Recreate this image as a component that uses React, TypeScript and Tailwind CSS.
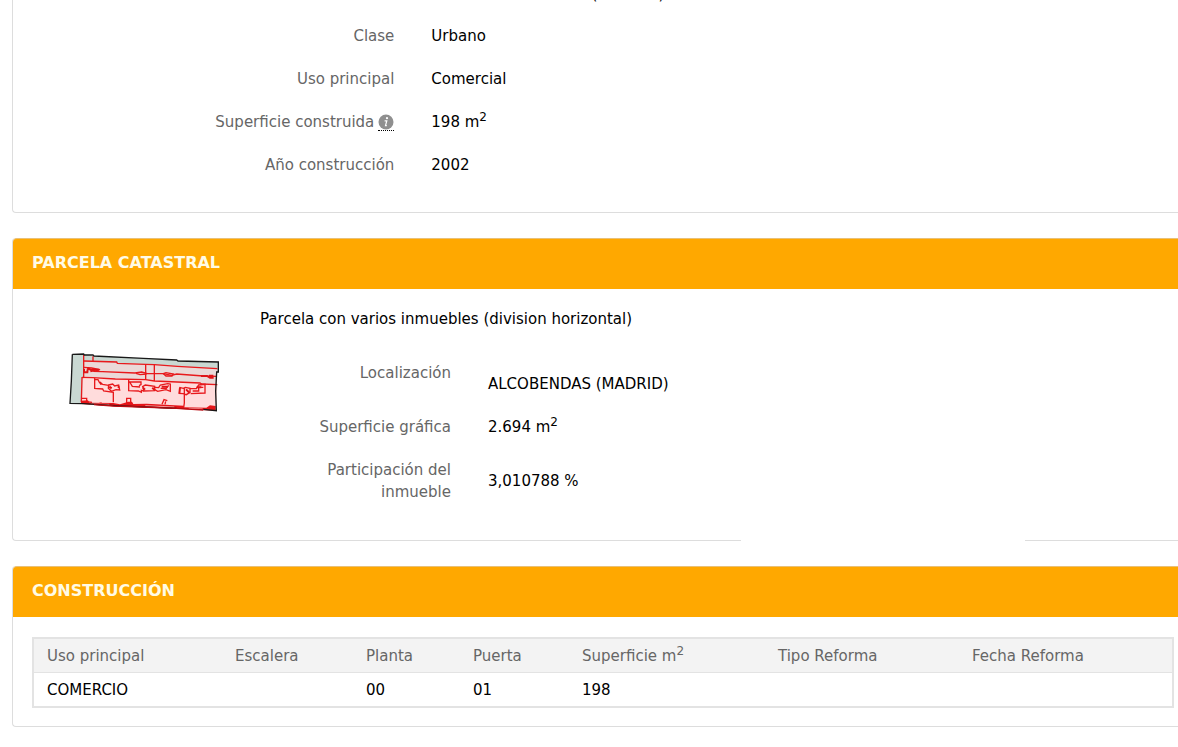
import type { ReactNode } from "react";

interface FieldProps {
  label: ReactNode;
  children: ReactNode;
}

const columns = [
  { key: "uso", label: "Uso principal", width: "w-[189px]" },
  { key: "escalera", label: "Escalera", width: "w-[131px]" },
  { key: "planta", label: "Planta", width: "w-[107px]" },
  { key: "puerta", label: "Puerta", width: "w-[109px]" },
  { key: "superficie", label: <>Superficie m<Squared /></>, width: "w-[196px]" },
  { key: "tipo", label: "Tipo Reforma", width: "w-[194px]" },
  { key: "fecha", label: "Fecha Reforma", width: "w-auto" },
];

const rows: Record<string, string>[] = [
  { uso: "COMERCIO", escalera: "", planta: "00", puerta: "01", superficie: "198", tipo: "", fecha: "" },
];

function Squared() {
  return <sup className="text-[12px]">2</sup>;
}

function InfoIcon() {
  return (
    <svg viewBox="0 0 16 16" className="block w-4 h-4" aria-hidden="true">
      <circle cx="8" cy="8" r="7.5" fill="#8f8f8f" />
      <circle cx="9" cy="4.2" r="1.1" fill="#fff" />
      <path d="M6.6 6.9h2.2L7.5 11.6h1.3" fill="none" stroke="#fff" strokeWidth="1.2" />
    </svg>
  );
}

function ParcelMap() {
  return (
    <svg viewBox="24 21 456 183" className="block w-[152px] h-[61px]" role="img" aria-label="Parcela">
      <path d="M37 28L71 27L100 33L475 51V82H470L469 197L350 191L165 183L70 176H30Z" fill="#c9d8d2" />
      <path d="M70 48L250 57L472 71L469 197L165 183L68 176Z" fill="#ead9d8" />
      <path d="M68 96L255 104L472 119L469 197L165 183L66 176Z" fill="#ffdcdc" />
      {/* Building lines */}
      <g fill="none" stroke="#e8191c" strokeWidth="4">
        <path d="M71 29V97L66 98L64 170" />
        <path d="M71 48L170 51L172 55L257 58L283 59L352 64L472 71" />
        <path d="M99 34V48M257 58V102M283 59V108" />
        <path d="M72 67L95 69L120 74L100 79L128 80L225 84L245 81L262 86L310 86L335 91L350 87L430 93L470 94" />
        <path d="M310 86L318 83L340 87L336 93L318 93ZM228 85L240 89L260 87" />
        <path d="M66 97L98 98L166 102L257 104L283 108L420 114L425 117L472 119" />
        <path d="M104 99V130L128 132L131 138L160 142V172M104 104H114L118 112L128 118L146 121" />
        <path d="M146 120L158 117L164 123L176 120L179 135L168 134L154 139L145 130Z" />
        <path d="M206 105V137L235 138L244 142V136L252 138M206 111H243V119L237 122M209 111L217 124L240 126" />
        <path d="M248 125L256 120L284 124V137L252 138Z" />
        <path d="M284 127L296 128L301 120L323 116L331 117V139L318 134L293 139L284 134M302 130H319L326 121" />
        <path d="M358 127L370 130L376 127L390 130V142L379 149L369 146L356 145M373 130V174L371 188" />
        <path d="M390 131H409L416 120L435 118V144L392 146M398 138H416V127H430" />
        <path d="M65 160H80V170L96 172M200 176V160H212V173M108 178L125 174" />
        <path d="M306 178L312 164L322 167M315 178L317 169" />
      </g>
      <g fill="none" stroke="#df1518" strokeWidth="6">
        <path d="M72 72V82L82 82L83 73M82 69L92 74L117 74M104 76L91 79" />
        <path d="M423 93H441L450 98H461M447 92H460" />
        <path d="M120 111L124 119M148 125L155 130M173 126H178M249 128L255 134M277 128L284 136" />
        <path d="M360 128L358 146M378 133L389 144M410 127H424M305 125H323" />
      </g>
      <path d="M62 167L84 166L88 173L160 174L180 178L205 170H216L220 177L260 176L371 182L372 187L439 188L450 181L467 183V197L350 191L160 184L64 177Z" fill="#e51418" />
      <path d="M92 177L148 178M256 182L343 186M386 190L428 192" stroke="#ffdcdc" strokeWidth="2" />
      {/* Parcel outline */}
      <path
        d="M37 28L71 27L73 30L99 30L102 33L250 40L350 45L354 48L475 51V81H470L467 139L469 197L430 193M37 28L34 109L30 175L70 176L165 182L350 190"
        fill="none"
        stroke="#181818"
        strokeWidth="4"
      />
      <path d="M102 179L160 183L350 190L430 195" fill="none" stroke="#b80c12" strokeWidth="4" />
    </svg>
  );
}

function SummaryField({ label, children }: FieldProps) {
  return (
    <div className="flex">
      <dt className="w-1/3 pr-[7px] text-right text-[#666]">{label}</dt>
      <dd className="flex-1 pl-[30px]">{children}</dd>
    </div>
  );
}

function ParcelField({ label, children }: FieldProps) {
  return (
    <div className="flex">
      <dt className="w-[191px] pl-10 text-right text-[#666]">{label}</dt>
      <dd className="flex-1 self-center pl-[37px]">{children}</dd>
    </div>
  );
}

function PanelHeading({ children }: { children: ReactNode }) {
  return (
    <h2 className="rounded-tl border-t border-[#e8c078] bg-[#ffa800] px-[19px] pt-[13px] pb-[15px] text-[16px] leading-[22px] font-bold text-[#fffbe6]">
      {children}
    </h2>
  );
}

export default function App() {
  return (
    <main
      className="min-h-screen overflow-hidden bg-white pl-3 text-[15px] leading-[22px] text-black [&_sup]:leading-none"
      style={{ fontFamily: 'Verdana, "DejaVu Sans", sans-serif' }}
    >
      <section className="rounded-bl border-b border-l border-[#ddd] pb-9">
        <dl className="flex flex-col gap-[21px]">
          {/* Last line of the address, cut by the top of the viewport */}
          <div className="flex h-1 items-end overflow-hidden leading-5">
            <dd className="ml-[33.333%] pl-[30px]">28108 ALCOBENDAS (MADRID)</dd>
          </div>
          <SummaryField label="Clase">Urbano</SummaryField>
          <SummaryField label="Uso principal">Comercial</SummaryField>
          <SummaryField
            label={
              <span className="inline-flex items-center gap-1">
                Superficie construida
                <abbr title="Superficie construida" className="border-b border-dotted border-black no-underline">
                  <InfoIcon />
                </abbr>
              </span>
            }
          >
            198 m<Squared />
          </SummaryField>
          <SummaryField label="Año construcción">2002</SummaryField>
        </dl>
      </section>

      <section className="relative mt-[25px] rounded-l border-b border-l border-[#ddd]">
        <PanelHeading>PARCELA CATASTRAL</PanelHeading>
        <div className="flex pt-[19px] pb-[37px]">
          <a href="#parcela" className="mt-11 mr-10 ml-[55px] shrink-0 self-start">
            <ParcelMap />
          </a>
          <div className="flex-1">
            <p>Parcela con varios inmuebles (division horizontal)</p>
            <dl className="mt-8 flex flex-col gap-[21px]">
              <ParcelField label="Localización">
                {/* Street line is blank, the town sits half a line lower */}
                <div className="pt-[11px]">ALCOBENDAS (MADRID)</div>
              </ParcelField>
              <ParcelField label="Superficie gráfica">
                2.694 m<Squared />
              </ParcelField>
              <ParcelField label="Participación del inmueble">3,010788 %</ParcelField>
            </dl>
          </div>
        </div>
        <span className="absolute -bottom-px left-[62.5%] h-px w-[284px] bg-white" />
      </section>

      <section className="mt-[25px] rounded-l border-b border-l border-[#ddd]">
        <PanelHeading>CONSTRUCCIÓN</PanelHeading>
        <div className="pt-5 pr-1 pb-[18px] pl-[19px]">
          <table className="w-full table-fixed border-collapse border-2 border-[#e3e3e3] text-left">
            <thead>
              <tr className="border-b border-[#e3e3e3] bg-[#f3f3f3] text-[#666]">
                {columns.map((col) => (
                  <th key={col.key} className={`${col.width} pt-[6px] pb-[5px] pl-[13px] font-normal`}>
                    {col.label}
                  </th>
                ))}
              </tr>
            </thead>
            <tbody>
              {rows.map((row, i) => (
                <tr key={i}>
                  {columns.map((col) => (
                    <td key={col.key} className="pt-[6px] pb-[5px] pl-[13px]">
                      {row[col.key]}
                    </td>
                  ))}
                </tr>
              ))}
            </tbody>
          </table>
        </div>
      </section>
    </main>
  );
}
